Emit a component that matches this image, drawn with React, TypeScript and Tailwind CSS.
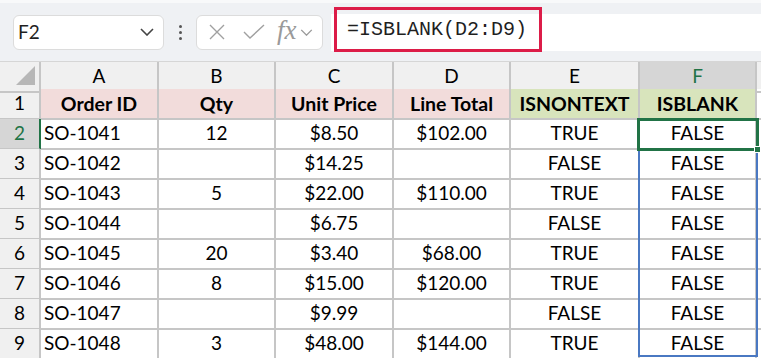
import React from 'react';

const cols = ['A', 'B', 'C', 'D', 'E', 'F'];

const rows = [
  ['SO-1041', '12', '$8.50', '$102.00', 'TRUE', 'FALSE'],
  ['SO-1042', '', '$14.25', '', 'FALSE', 'FALSE'],
  ['SO-1043', '5', '$22.00', '$110.00', 'TRUE', 'FALSE'],
  ['SO-1044', '', '$6.75', '', 'FALSE', 'FALSE'],
  ['SO-1045', '20', '$3.40', '$68.00', 'TRUE', 'FALSE'],
  ['SO-1046', '8', '$15.00', '$120.00', 'TRUE', 'FALSE'],
  ['SO-1047', '', '$9.99', '', 'FALSE', 'FALSE'],
  ['SO-1048', '3', '$48.00', '$144.00', 'TRUE', 'FALSE'],
];

const headers = ['Order ID', 'Qty', 'Unit Price', 'Line Total', 'ISNONTEXT', 'ISBLANK'];

const gridCols = 'grid grid-cols-[41px_118px_117px_118px_117px_129px_117px_1fr]';

function Chevron({ className }: { className?: string }) {
  return (
    <svg viewBox="0 0 14 8" className={className} fill="none" stroke="currentColor" strokeWidth="1.6">
      <path d="M1 1l6 6 6-6" />
    </svg>
  );
}

function Toolbar() {
  return (
    <div className="h-[61px] bg-[#eff1f4] border-t-[3px] border-t-[#f8f9fa] flex items-center relative">
      <div className="ml-[13px] w-[151px] h-[35px] bg-white rounded-[6px] border border-[#dcdcdc] flex items-center justify-between pl-[4px] pr-[9px]">
        <span className="text-[19px] text-[#1f1f1f]">F2</span>
        <Chevron className="w-[14px] h-[8px] text-[#444]" />
      </div>
      <div className="w-[32px] flex flex-col items-center gap-[3px]">
        <span className="w-[3px] h-[3px] bg-[#555] rounded-full" />
        <span className="w-[3px] h-[3px] bg-[#555] rounded-full" />
        <span className="w-[3px] h-[3px] bg-[#555] rounded-full" />
      </div>
      <div className="w-[127px] h-[35px] bg-white rounded-[6px] border border-[#dcdcdc] flex items-center pl-[10px] text-[#a0a0a0]">
        <svg viewBox="0 0 20 20" className="w-[20px] h-[20px]" fill="none" stroke="currentColor" strokeWidth="1.4">
          <path d="M3 3l14 14M17 3L3 17" />
        </svg>
        <svg viewBox="0 0 22 18" className="w-[22px] h-[18px] ml-[16px]" fill="none" stroke="currentColor" strokeWidth="1.4">
          <path d="M1 9l6 6L21 2" />
        </svg>
        <span className="ml-[12px] text-[27px] italic text-[#9a9a9a] font-['Liberation_Serif',serif] leading-none -mt-[3px]">fx</span>
        <Chevron className="w-[13px] h-[7px] ml-[3px] text-[#9a9a9a]" />
      </div>
      <div className="ml-[8px] flex-1 h-[37px] bg-white self-center" />
      <div className="absolute left-[334px] top-[4px] w-[208px] h-[45px] border-[3px] border-[#dc1c48] flex items-center pl-[10px]">
        <span className="text-[20px] text-[#1f1f1f] font-['Liberation_Mono',monospace]">=ISBLANK(D2:D9)</span>
      </div>
    </div>
  );
}

const line = 'border-[#c6c6c6]';

export default function App() {
  return (
    <div className="w-[761px] h-[358px] overflow-hidden bg-white font-['Lato','Liberation_Sans',sans-serif] text-black">
      <Toolbar />
      <div className="relative">
        <div className={`${gridCols} h-[28px] bg-[#f0f0f0] border-t border-[#d6d6d6]`}>
          <div className={`border-r-2 border-b-2 ${line} relative`}>
            <svg viewBox="0 0 20 20" className="absolute left-[16px] top-[4px] w-[19px] h-[19px]">
              <path d="M20 0L20 20L0 20Z" fill="#b7b7b7" />
            </svg>
          </div>
          {cols.map((c) => (
            <div
              key={c}
              className={
                c === 'F'
                  ? `bg-[#d6d6d6] border-r-2 ${line} border-b-2 border-b-[#217346] text-[#217346] flex items-center justify-center text-[19px]`
                  : `border-r-2 border-b-2 ${line} flex items-center justify-center text-[19px]`
              }
            >
              {c}
            </div>
          ))}
          <div className={`border-b-2 ${line}`} />
        </div>

        <div className={`${gridCols} h-[30px]`}>
          <div className={`bg-[#f0f0f0] border-r-2 border-b-2 ${line} flex items-center justify-center text-[19px]`}>1</div>
          {headers.map((h, i) => (
            <div
              key={h}
              className={`${i < 4 ? 'bg-[#f2dcdb]' : 'bg-[#d8e4bc]'} border-r-2 border-b-2 ${line} flex items-center justify-center font-bold text-[19.5px]`}
            >
              {h}
            </div>
          ))}
          <div className={`border-b-2 ${line}`} />
        </div>

        {rows.map((r, ri) => (
          <div key={ri} className={`${gridCols} h-[30px]`}>
            <div
              className={
                ri === 0
                  ? `bg-[#d6d6d6] border-b-2 ${line} border-r-2 border-r-[#217346] text-[#217346] flex items-center justify-center text-[19px]`
                  : `bg-[#f0f0f0] border-r-2 border-b-2 ${line} flex items-center justify-center text-[19px]`
              }
            >
              {ri + 2}
            </div>
            {r.map((v, ci) => (
              <div
                key={ci}
                className={`border-r-2 border-b-2 ${line} flex items-center text-[19px] ${ci === 0 ? 'justify-start pl-[3px]' : 'justify-center'}`}
              >
                {v}
              </div>
            ))}
            <div className={`border-b-2 ${line}`} />
          </div>
        ))}

        {/* selected range F3:F9 */}
        <div className="absolute left-[638px] top-[88px] w-[120px] h-[208px] border-2 border-[#4a78c2] pointer-events-none" />
        {/* active cell F2 */}
        <div className="absolute left-[637px] top-[57px] w-[122px] h-[33px] border-[3px] border-[#217346] pointer-events-none" />
        <div className="absolute left-[754px] top-[85px] w-[7px] h-[7px] bg-[#217346] border border-white" />
      </div>
    </div>
  );
}
